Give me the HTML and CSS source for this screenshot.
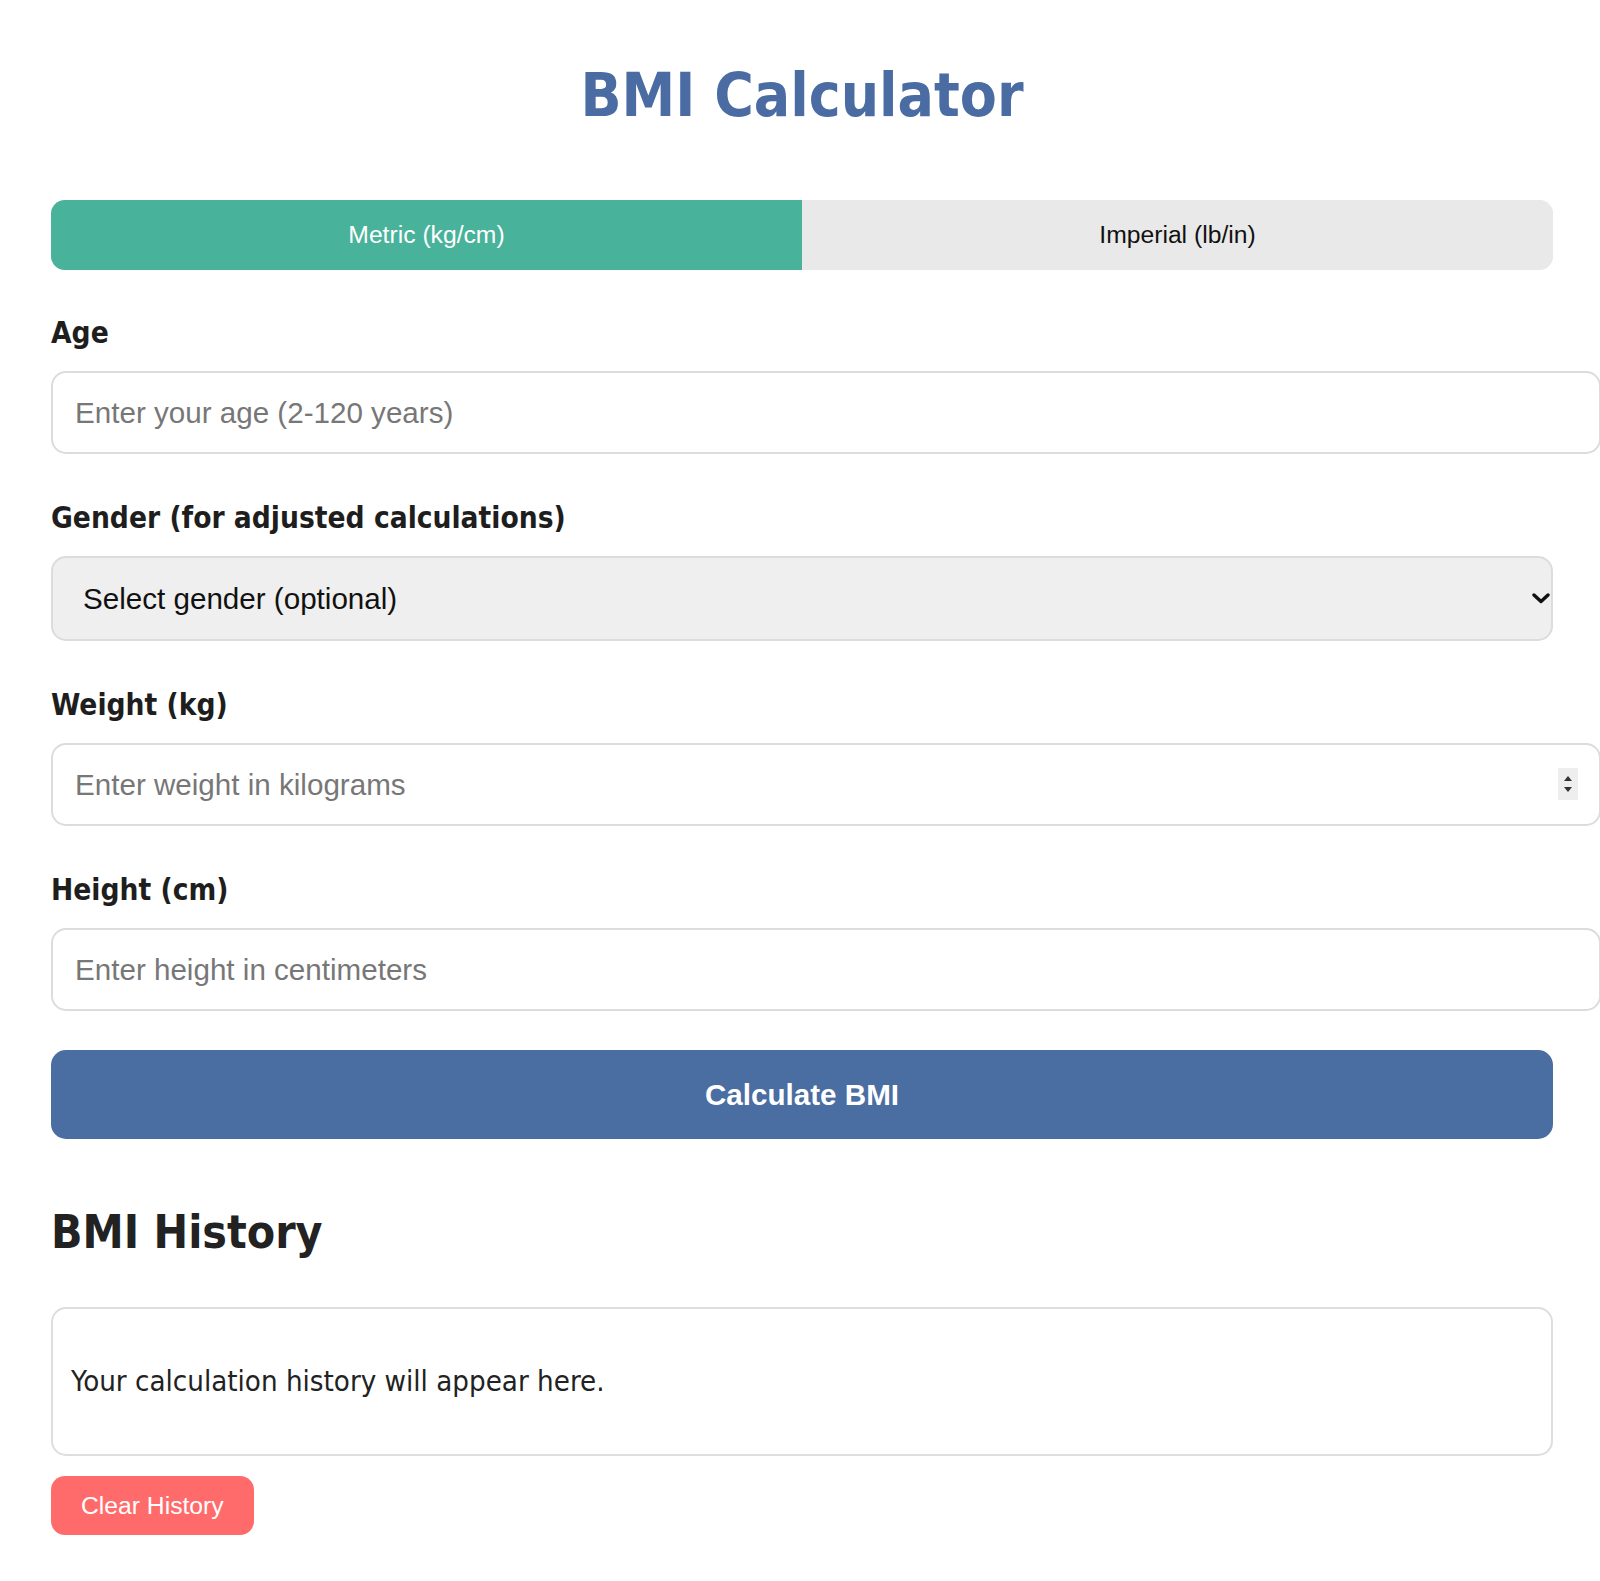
FILE: index.html
```html
<!DOCTYPE html>
<html lang="en">
<head>
<meta charset="utf-8">
<title>BMI Calculator</title>
<link rel="stylesheet" href="styles.css">
</head>
<body>
<div class="container">
  <h1 class="title">BMI Calculator</h1>

  <div class="unit-toggle">
    <button class="unit-btn active">Metric (kg/cm)</button>
    <button class="unit-btn">Imperial (lb/in)</button>
  </div>

  <div class="form-group">
    <label class="field-label" for="age">Age</label>
    <input class="field-input" type="text" id="age" placeholder="Enter your age (2-120 years)">
  </div>

  <div class="form-group">
    <label class="field-label" for="gender">Gender (for adjusted calculations)</label>
    <div class="select-wrap">
      <select class="field-select" id="gender">
        <option>Select gender (optional)</option>
        <option>Male</option>
        <option>Female</option>
      </select>
      <svg class="chevron" viewBox="0 0 18 11" width="18" height="11" aria-hidden="true">
        <polyline points="2,2 9,8.5 16,2" fill="none" stroke="#111" stroke-width="3.4" stroke-linecap="round" stroke-linejoin="round"/>
      </svg>
    </div>
  </div>

  <div class="form-group">
    <label class="field-label" for="weight">Weight (kg)</label>
    <div class="input-wrap">
      <input class="field-input" type="text" id="weight" placeholder="Enter weight in kilograms">
      <span class="spinner" aria-hidden="true">
        <span class="spin-up"></span>
        <span class="spin-down"></span>
      </span>
    </div>
  </div>

  <div class="form-group last">
    <label class="field-label" for="height">Height (cm)</label>
    <input class="field-input" type="text" id="height" placeholder="Enter height in centimeters">
  </div>

  <button class="calc-btn">Calculate BMI</button>

  <h2 class="history-title">BMI History</h2>
  <div class="history-box">
    <p class="history-empty">Your calculation history will appear here.</p>
  </div>
  <button class="clear-btn">Clear History</button>
</div>
</body>
</html>
```

FILE: styles.css
```css
html, body {
  margin: 0;
  padding: 0;
  background: #ffffff;
}

body {
  padding: 0 47px 0 51px;
  font-family: "DejaVu Sans Condensed", "DejaVu Sans", sans-serif;
  font-stretch: condensed;
  color: #222;
}

.container {
  width: 1502px;
  padding-bottom: 46px;
}

.title {
  margin: 60px 0 70px;
  font-family: "DejaVu Sans Condensed", "DejaVu Sans", sans-serif;
  font-stretch: condensed;
  font-weight: bold;
  font-size: 60px;
  line-height: 70px;
  text-align: center;
  color: #4a6ca3;
}

.unit-toggle {
  display: flex;
  height: 70px;
  margin-bottom: 46px;
  border-radius: 14px;
  overflow: hidden;
  background: #e9e9e9;
}

.unit-btn {
  flex: 1;
  border: none;
  margin: 0;
  padding: 0;
  background: #e9e9e9;
  color: #111;
  font-family: "Liberation Sans", Arial, sans-serif;
  font-size: 24.7px;
  cursor: pointer;
}

.unit-btn.active {
  background: #48b29a;
  color: #ffffff;
}

.form-group {
  margin-bottom: 47px;
}

.form-group.last {
  margin-bottom: 39px;
}

.field-label {
  display: block;
  margin-bottom: 20.5px;
  font-family: "DejaVu Sans Condensed", "DejaVu Sans", sans-serif;
  font-stretch: condensed;
  font-weight: bold;
  font-size: 29.6px;
  line-height: 34.5px;
  color: #1e1e1e;
}

.field-input {
  display: block;
  box-sizing: content-box;
  width: 100%;
  height: 35px;
  margin: 0;
  padding: 22px;
  border: 2px solid #dcdcdc;
  border-radius: 15px;
  background: #ffffff;
  font-family: "Liberation Sans", Arial, sans-serif;
  font-size: 29.6px;
  color: #222;
  outline: none;
}

.field-input::placeholder {
  color: #777777;
}

.input-wrap {
  position: relative;
}

.spinner {
  position: absolute;
  top: 25px;
  right: -25px;
  width: 20px;
  height: 32px;
  background: #eeeeee;
  display: flex;
  flex-direction: column;
  align-items: center;
  justify-content: center;
  gap: 6px;
}

.spin-up {
  width: 0;
  height: 0;
  border-left: 4px solid transparent;
  border-right: 4px solid transparent;
  border-bottom: 5px solid #333;
}

.spin-down {
  width: 0;
  height: 0;
  border-left: 4px solid transparent;
  border-right: 4px solid transparent;
  border-top: 5px solid #333;
}

.select-wrap {
  position: relative;
}

.field-select {
  display: block;
  box-sizing: border-box;
  width: 100%;
  height: 85px;
  margin: 0;
  padding: 0 60px 0 30px;
  border: 2px solid #dcdcdc;
  border-radius: 15px;
  background: #efefef;
  -webkit-appearance: none;
  appearance: none;
  font-family: "Liberation Sans", Arial, sans-serif;
  font-size: 29.6px;
  color: #111;
  outline: none;
}

.chevron {
  position: absolute;
  top: 37px;
  right: 3px;
  pointer-events: none;
}

.calc-btn {
  display: block;
  width: 100%;
  height: 89px;
  margin: 0;
  padding: 0;
  border: none;
  border-radius: 15px;
  background: #4a6da2;
  color: #ffffff;
  font-family: "Liberation Sans", Arial, sans-serif;
  font-weight: bold;
  font-size: 29.6px;
  cursor: pointer;
}

.history-title {
  margin: 66px 0 48px;
  font-family: "DejaVu Sans Condensed", "DejaVu Sans", sans-serif;
  font-stretch: condensed;
  font-weight: bold;
  font-size: 46px;
  line-height: 54px;
  color: #222;
}

.history-box {
  box-sizing: border-box;
  height: 149px;
  padding: 25px 18px;
  border: 2px solid #dedede;
  border-radius: 15px;
  background: #ffffff;
}

.history-empty {
  margin: 30px 0;
  font-family: "DejaVu Sans Condensed", "DejaVu Sans", sans-serif;
  font-stretch: condensed;
  font-size: 29.2px;
  color: #222;
}

.clear-btn {
  display: block;
  height: 59px;
  margin: 20px 0 0;
  padding: 0 30px;
  border: none;
  border-radius: 14px;
  background: #ff6b6b;
  color: #ffffff;
  font-family: "Liberation Sans", Arial, sans-serif;
  font-size: 24.7px;
  cursor: pointer;
}
```
